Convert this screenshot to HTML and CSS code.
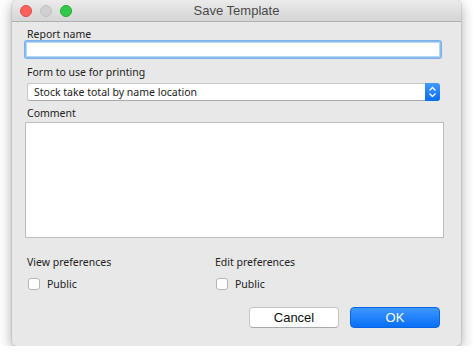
FILE: index.html
```html
<!DOCTYPE html>
<html lang="en">
<head>
    <meta charset="UTF-8">
    <title>Save Template</title>
    <link rel="stylesheet" href="styles.css">
</head>
<body>
    <div class="window">
        <div class="titlebar">
            <div class="lights">
                <span class="light red"></span>
                <span class="light grey"></span>
                <span class="light green"></span>
            </div>
            <div class="title">Save Template</div>
        </div>
        <div class="content">
            <div class="label">Report name</div>
            <input class="text-input" type="text">

            <div class="label form-label">Form to use for printing</div>
            <div class="select">
                <span class="select-text">Stock take total by name location</span>
                <span class="stepper">
                    <svg width="9" height="12" viewBox="0 0 9 12">
                        <path d="M1.5 4.5 L4.5 1.5 L7.5 4.5 M1.5 7.5 L4.5 10.5 L7.5 7.5" fill="none" stroke="#fff" stroke-width="1.3"/>
                    </svg>
                </span>
            </div>

            <div class="label comment-label">Comment</div>
            <textarea class="comment"></textarea>

            <div class="prefs">
                <div class="pref">
                    <div class="label">View preferences</div>
                    <label class="check"><span class="box"></span>Public</label>
                </div>
                <div class="pref">
                    <div class="label">Edit preferences</div>
                    <label class="check"><span class="box"></span>Public</label>
                </div>
            </div>

            <div class="buttons">
                <button class="btn cancel">Cancel</button>
                <button class="btn ok">OK</button>
            </div>
        </div>
    </div>
</body>
</html>
```

FILE: styles.css
```css
body {
    margin: 0;
    background: #fff;
    font-family: 'Noto Sans', sans-serif;
    font-size: 10.5px;
    color: #222;
}
.window {
    margin-left: 12px;
    width: 449px;
    height: 346px;
    border-radius: 5px;
    background: #e8e8e8;
    box-shadow: 0 4px 14px rgba(0, 0, 0, 0.35), 0 0 0 1px rgba(0, 0, 0, 0.08);
    overflow: hidden;
    display: flex;
    flex-direction: column;
}
.titlebar {
    height: 21px;
    background: linear-gradient(#ebebeb, #d5d5d5);
    border-bottom: 1px solid #b1b1b1;
    display: flex;
    align-items: center;
    position: relative;
}
.lights {
    display: flex;
    gap: 8px;
    padding-left: 8px;
}
.light {
    width: 12px;
    height: 12px;
    border-radius: 50%;
    box-sizing: border-box;
}
.red { background: #fc605c; border: 1px solid #de4a45; }
.grey { background: #d0d0d0; border: 1px solid #c0c0c0; }
.green { background: #34c84a; border: 1px solid #27a839; }
.title {
    position: absolute;
    left: 0;
    right: 0;
    text-align: center;
    font-family: 'Liberation Sans', sans-serif;
    font-size: 13px;
    color: #4a4a4a;
}
.content {
    padding: 6px 17px 0 13px;
    display: flex;
    flex-direction: column;
}
.label {
    height: 13px;
    line-height: 12px;
    padding-left: 2px;
}
.text-input {
    margin: 0 3px 0 0;
    height: 17px;
    box-sizing: border-box;
    border: 1px solid #8fbcec;
    box-shadow: 0 0 0 1px #79b2ea, inset 0 0 0 1px #b8d6f4;
    border-radius: 2px;
    background: #fff;
    outline: none;
}
.form-label {
    margin-top: 8px;
}
.select {
    margin: 4px 4px 0 2px;
    height: 18px;
    box-sizing: border-box;
    background: #fff;
    border: 1px solid #c8c8c8;
    border-bottom-color: #aaa;
    border-radius: 3px;
    display: flex;
    align-items: center;
}
.select-text {
    padding-left: 6px;
    flex: 1;
}
.stepper {
    width: 15px;
    height: 18px;
    margin: -1px -1px -1px 0;
    border-radius: 0 3px 3px 0;
    background: linear-gradient(#3f9bff, #0a6cf2);
    display: flex;
    align-items: center;
    justify-content: center;
}
.comment-label {
    margin-top: 6px;
}
.comment {
    margin: 2px 0 0 0;
    height: 116px;
    box-sizing: border-box;
    border: 1px solid #bdbdbd;
    background: #fff;
    resize: none;
    outline: none;
}
.prefs {
    margin-top: 18px;
    display: grid;
    grid-template-columns: 188px 1fr;
}
.pref .label {
    height: 14px;
}
.check {
    margin-top: 7px;
    display: flex;
    align-items: center;
    gap: 7px;
    padding-left: 3px;
}
.box {
    width: 12px;
    height: 12px;
    box-sizing: border-box;
    border: 1px solid #b5b5b5;
    border-radius: 3px;
    background: #fff;
}
.buttons {
    margin-top: 16px;
    display: flex;
    justify-content: flex-end;
    gap: 11px;
    padding-right: 4px;
}
.btn {
    width: 90px;
    height: 21px;
    border-radius: 4px;
    font-family: 'Liberation Sans', sans-serif;
    font-size: 13px;
    padding: 0;
}
.cancel {
    background: #fff;
    border: 1px solid #c5c5c5;
    border-bottom-color: #aaa;
    color: #111;
}
.ok {
    background: linear-gradient(#3d97ff, #0a6ff7);
    border: 1px solid #0a66e0;
    color: #fff;
}
```
